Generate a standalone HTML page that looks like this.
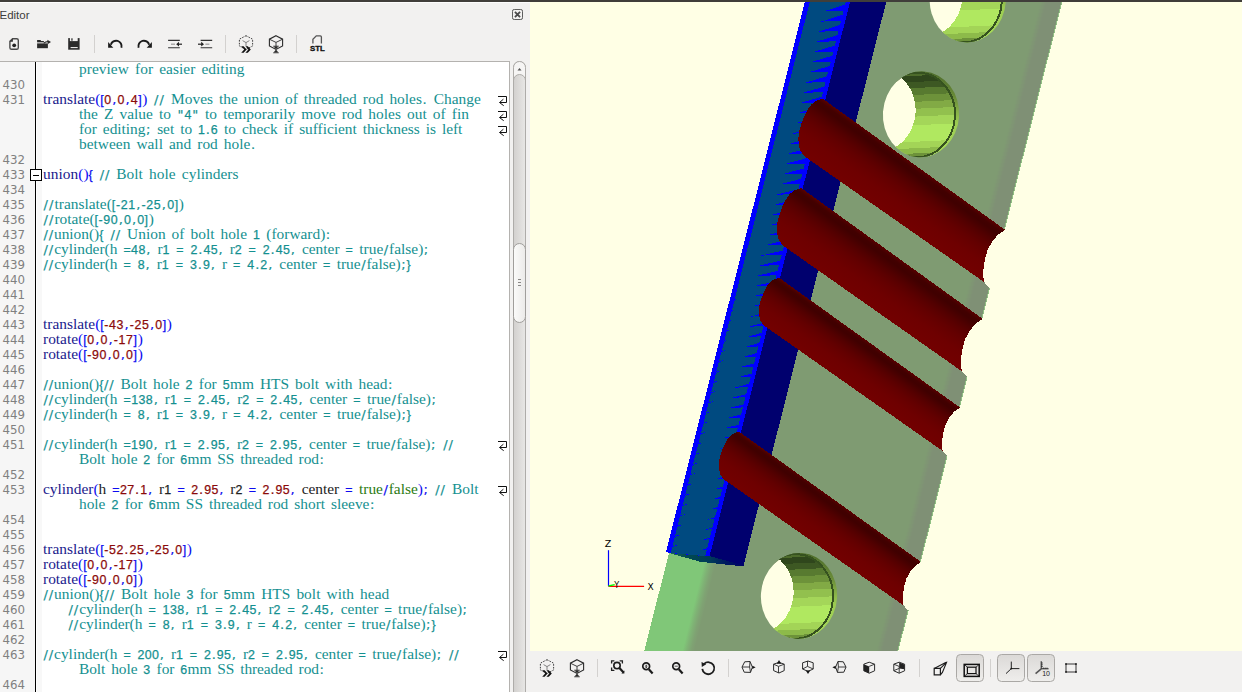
<!DOCTYPE html>
<html><head><meta charset="utf-8"><title>OpenSCAD</title>
<style>
html,body{margin:0;padding:0}
body{width:1242px;height:692px;overflow:hidden;position:relative;background:#f2f1f0;font-family:"Liberation Sans","DejaVu Sans",sans-serif}
#topbar{position:absolute;left:0;top:0;width:1242px;height:2px;background:#403e3a}
#hl{position:absolute;left:0;top:2px;width:530px;height:1px;background:#fdfdfd}
#title{position:absolute;left:-0.5px;top:7.6px;font-size:11.5px;color:#3c3c3c;line-height:14px}
#closeb{position:absolute;left:512px;top:9px}
#frame{position:absolute;left:-1px;top:61px;width:511px;height:640px;background:#fff;border:1px solid #b4b2af;box-sizing:border-box}
#margin{position:absolute;left:0;top:62px;width:35px;height:630px;background:#f6f6f6}
#mline{position:absolute;left:35px;top:62px;width:1.3px;height:630px;background:#000}
#fold{position:absolute;left:37px;top:62px;width:5px;height:630px;background:#f8f8f8}
.ln{position:absolute;left:0;width:25px;text-align:right;height:15px;line-height:15px;font-family:"DejaVu Sans",sans-serif;font-size:11.8px;color:#808080;padding-top:2px;box-sizing:border-box}
.cl{position:absolute;height:15px;line-height:15px;white-space:pre;font-family:"Liberation Serif",serif;font-size:15.4px;word-spacing:2.2px;color:#000}
.cl i{font-style:normal;font-family:"Liberation Sans",sans-serif;font-size:12.4px;word-spacing:2.6px;letter-spacing:var(--ls);-webkit-text-stroke:0.25px}
.cl u{text-decoration:none;font-family:"DejaVu Sans",sans-serif;font-size:13px;letter-spacing:calc(0.5px + var(--ls));margin-left:0.5px;-webkit-text-stroke:0.2px}
.k{color:#1a1a8c} .p{color:#0c0cf0} .n{color:#8b0a0a} .c{color:#149090} .v{color:#222} .g{color:#2a7a12}
.wm{position:absolute;left:498px}
#fold433{position:absolute;left:30px;top:169px;width:10px;height:10px;border:1px solid #000;background:#fff}
#fold433:after{content:"";position:absolute;left:2px;top:4.5px;width:6px;height:1px;background:#000}
#sb{position:absolute;left:513px;top:61px;width:13px;height:640px}
#view{position:absolute;left:530px;top:2px;width:712px;height:649px;background:#ffffe5;overflow:hidden}
#btool{position:absolute;left:526px;top:651px;width:716px;height:41px;background:#f2f1f0}
</style></head><body>
<div id="topbar"></div><div id="hl"></div>
<div id="title">Editor</div>
<svg id="closeb" width="11" height="11" viewBox="0 0 12 12"><rect x="0.5" y="0.5" width="11" height="11" rx="2" fill="none" stroke="#4a4a4a"/><path d="M3.2 3.2L8.8 8.8M8.8 3.2L3.2 8.8" stroke="#4a4a4a" stroke-width="2" fill="none"/></svg>
<svg style="position:absolute;left:8px;top:37px" width="12" height="14" viewBox="0 0 12 14" ><path d="M4.6 1.7H8.7Q10.3 1.7 10.3 3.3V10.7Q10.3 12.3 8.7 12.3H3.5Q1.9 12.3 1.9 10.7V4.4Z" fill="none" stroke="#4a4a4a" stroke-width="1.4"/><path d="M4.9 1.6V4.8H1.8Z" fill="#333"/><circle cx="6.2" cy="8.3" r="1.9" fill="#222"/></svg>
<svg style="position:absolute;left:36px;top:38px" width="16" height="12" viewBox="0 0 16 12" ><path d="M1.1 2H4.8V3.1H7.9V4.1H1.1Z" fill="#2b2b2b"/><path d="M1.1 4.6H7.4" stroke="#8a8a8a" stroke-width="0.7"/><path d="M1.1 5.4H11.9V10.2H1.1Z" fill="#2b2b2b"/><path d="M7.6 5.2Q9.6 3.6 12 3.6" fill="none" stroke="#2b2b2b" stroke-width="1.3"/><path d="M11.3 1.7L15 4L11.9 6.1Z" fill="#2b2b2b"/></svg>
<svg style="position:absolute;left:67px;top:37px" width="14" height="14" viewBox="0 0 14 14" ><path d="M1.2 1.1H12.6V12.7H1.2Z" fill="#2b2b2b"/><rect x="2.9" y="0.9" width="7.8" height="3.2" fill="#f2f1f0"/><rect x="4.3" y="1.3" width="1.3" height="2.4" fill="#333"/><rect x="3.6" y="10" width="7.1" height="1.1" fill="#e6e5e4"/></svg>
<div style="position:absolute;left:94px;top:35px;width:1px;height:18px;background:#d3d1cf"></div>
<svg style="position:absolute;left:106px;top:38px" width="18" height="12" viewBox="0 0 18 12" ><path d="M15.4 9.7A5.5 5.5 0 0 0 4.8 6.7" fill="none" stroke="#1c1c1c" stroke-width="1.9"/><path d="M2.1 4L7.3 9.7H2.1Z" fill="#1c1c1c"/></svg>
<svg style="position:absolute;left:134px;top:38px" width="20" height="12" viewBox="0 0 20 12" ><path d="M4.6 9.7A5.5 5.5 0 0 1 15.2 6.7" fill="none" stroke="#1c1c1c" stroke-width="1.9"/><path d="M17.9 4L12.7 9.7H17.9Z" fill="#1c1c1c"/></svg>
<svg style="position:absolute;left:167px;top:38px" width="17" height="12" viewBox="0 0 17 12" ><path d="M1.1 2.4H12.8M1.1 9.8H12.8" stroke="#333" stroke-width="1.1"/><path d="M4 6.2H8" stroke="#9a9a9a" stroke-width="1.2"/><path d="M10.6 6.2H15" stroke="#222" stroke-width="1.2"/><path d="M9.2 6.2L12 3.8V8.6Z" fill="#222"/></svg>
<svg style="position:absolute;left:197px;top:38px" width="17" height="12" viewBox="0 0 17 12" ><path d="M3.6 2.4H15.2M3.6 9.8H15.2" stroke="#333" stroke-width="1.1"/><path d="M8.4 6.2H12.4" stroke="#9a9a9a" stroke-width="1.2"/><path d="M1 6.2H5" stroke="#222" stroke-width="1.2"/><path d="M7 6.2L4.2 3.8V8.6Z" fill="#222"/></svg>
<div style="position:absolute;left:225px;top:35px;width:1px;height:18px;background:#d3d1cf"></div>
<svg style="position:absolute;left:238px;top:34.5px" width="16" height="19" viewBox="0 0 16 19" ><path d="M8 0.7L14.6 4.2V11L8 14.5L1.4 11V4.2Z" fill="none" stroke="#2b2b2b" stroke-width="0.9" stroke-dasharray="1.6 1.2"/><path d="M8 7.6V11M8 7.6L4.6 5.6M8 7.6L11.4 5.6" fill="none" stroke="#666" stroke-width="0.8"/><path d="M3.2 11.2H5.6L8.6 14.4L5.6 17.8H3.2L6.2 14.4ZM7.4 11.2H9.8L12.8 14.4L9.8 17.8H7.4L10.4 14.4Z" fill="#111"/></svg>
<svg style="position:absolute;left:268px;top:34.5px" width="16" height="19" viewBox="0 0 16 19" ><path d="M8 0.7L14.6 4.2V11L8 14.5L1.4 11V4.2Z" fill="none" stroke="#2b2b2b" stroke-width="1.1"/><path d="M8 7.4V12M8 7.4L1.6 4.3M8 7.4L14.4 4.3" fill="none" stroke="#2b2b2b" stroke-width="0.9"/><path d="M5.6 11.4H10.4L8 14.2ZM5.6 17.6H10.4L8 14.6Z" fill="#2b2b2b"/><path d="M5.2 11.2H10.8M5.2 17.8H10.8" stroke="#2b2b2b" stroke-width="0.8"/></svg>
<div style="position:absolute;left:296px;top:35px;width:1px;height:18px;background:#d3d1cf"></div>
<svg style="position:absolute;left:308px;top:34px" width="20" height="19" viewBox="0 0 20 19" ><path d="M4.9 9.6V5.2L8.3 1.8H12.3Q13.4 1.8 13.4 2.9V9.6" fill="none" stroke="#555" stroke-width="1.3"/><text x="9.4" y="17.3" text-anchor="middle" font-family="Liberation Sans, DejaVu Sans, sans-serif" font-weight="bold" font-size="7.8" fill="#111" stroke="#111" stroke-width="0.35">STL</text></svg>
<div id="frame"></div><div id="margin"></div><div id="mline"></div><div id="fold"></div>
<div class="cl" id="r0" style="top:61px;left:79px;--ls:0.35px;letter-spacing:0.046px"><span class="c">preview for easier editing</span></div>
<div class="ln" style="top:76px">430</div>
<div class="ln" style="top:91px">431</div>
<div class="cl" id="r2" style="top:91px;left:43px;--ls:0.598px"><span class="k">translate</span><span class="p">(<i>[</i></span><span class="n"><i>0</i></span><span class="p"><u>,</u></span><span class="n"><i>0</i></span><span class="p"><u>,</u></span><span class="n"><i>4</i></span><span class="p"><i>]</i>)</span><span class="c"> <u>//</u> Moves the union of threaded rod holes<u>.</u> Change</span></div>
<svg class="wm" style="top:96px" width="10" height="11" viewBox="0 0 10 11"><path d="M0 0.5H8.5V6.5H1.8M5.4 3.2L1.5 6.5L5.7 9.7" fill="none" stroke="#111" stroke-width="1"/></svg>
<div class="cl" id="r3" style="top:106px;left:79px;--ls:0.35px;letter-spacing:0.024px"><span class="c">the Z value to <u>"</u><i>4</i><u>"</u> to temporarily move rod holes out of fin</span></div>
<svg class="wm" style="top:111px" width="10" height="11" viewBox="0 0 10 11"><path d="M0 0.5H8.5V6.5H1.8M5.4 3.2L1.5 6.5L5.7 9.7" fill="none" stroke="#111" stroke-width="1"/></svg>
<div class="cl" id="r4" style="top:121px;left:79px;--ls:0.35px;letter-spacing:-0.031px"><span class="c">for editing<u>;</u> set to <i>1</i><u>.</u><i>6</i> to check if sufficient thickness is left</span></div>
<svg class="wm" style="top:126px" width="10" height="11" viewBox="0 0 10 11"><path d="M0 0.5H8.5V6.5H1.8M5.4 3.2L1.5 6.5L5.7 9.7" fill="none" stroke="#111" stroke-width="1"/></svg>
<div class="cl" id="r5" style="top:136px;left:79px;--ls:0.35px;letter-spacing:0.008px"><span class="c">between wall and rod hole<u>.</u></span></div>
<div class="ln" style="top:151px">432</div>
<div class="ln" style="top:166px">433</div>
<div class="cl" id="r7" style="top:166px;left:43px;--ls:0.35px;letter-spacing:0.041px"><span class="k">union</span><span class="p">()<i>{</i></span><span class="c"> <u>//</u> Bolt hole cylinders</span></div>
<div class="ln" style="top:181px">434</div>
<div class="ln" style="top:196px">435</div>
<div class="cl" id="r9" style="top:196px;left:43px;--ls:0.640px"><span class="c"><u>//</u>translate(<i>[-21</i><u>,</u><i>-25</i><u>,</u><i>0]</i>)</span></div>
<div class="ln" style="top:211px">436</div>
<div class="cl" id="r10" style="top:211px;left:43px;--ls:0.576px"><span class="c"><u>//</u>rotate(<i>[-90</i><u>,</u><i>0</i><u>,</u><i>0]</i>)</span></div>
<div class="ln" style="top:226px">437</div>
<div class="cl" id="r11" style="top:226px;left:43px;--ls:0.334px"><span class="c"><u>//</u>union()<i>{ </i><u>//</u> Union of bolt hole <i>1</i> (forward)<u>:</u></span></div>
<div class="ln" style="top:241px">438</div>
<div class="cl" id="r12" style="top:241px;left:43px;--ls:0.433px"><span class="c"><u>//</u>cylinder(h <i>=48</i><u>,</u> r<i>1 = 2</i><u>.</u><i>45</i><u>,</u> r<i>2 = 2</i><u>.</u><i>45</i><u>,</u> center <i>=</i> true<u>/</u>false)<u>;</u></span></div>
<div class="ln" style="top:256px">439</div>
<div class="cl" id="r13" style="top:256px;left:43px;--ls:0.464px"><span class="c"><u>//</u>cylinder(h <i>= 8</i><u>,</u> r<i>1 = 3</i><u>.</u><i>9</i><u>,</u> r <i>= 4</i><u>.</u><i>2</i><u>,</u> center <i>=</i> true<u>/</u>false)<u>;</u><i>}</i></span></div>
<div class="ln" style="top:271px">440</div>
<div class="ln" style="top:286px">441</div>
<div class="ln" style="top:301px">442</div>
<div class="ln" style="top:316px">443</div>
<div class="cl" id="r17" style="top:316px;left:43px;--ls:0.598px"><span class="k">translate</span><span class="p">(<i>[</i></span><span class="n"><i>-43</i></span><span class="p"><u>,</u></span><span class="n"><i>-25</i></span><span class="p"><u>,</u></span><span class="n"><i>0</i></span><span class="p"><i>]</i>)</span></div>
<div class="ln" style="top:331px">444</div>
<div class="cl" id="r18" style="top:331px;left:43px;--ls:0.621px"><span class="k">rotate</span><span class="p">(<i>[</i></span><span class="n"><i>0</i></span><span class="p"><u>,</u></span><span class="n"><i>0</i></span><span class="p"><u>,</u></span><span class="n"><i>-17</i></span><span class="p"><i>]</i>)</span></div>
<div class="ln" style="top:346px">445</div>
<div class="cl" id="r19" style="top:346px;left:43px;--ls:0.621px"><span class="k">rotate</span><span class="p">(<i>[</i></span><span class="n"><i>-90</i></span><span class="p"><u>,</u></span><span class="n"><i>0</i></span><span class="p"><u>,</u></span><span class="n"><i>0</i></span><span class="p"><i>]</i>)</span></div>
<div class="ln" style="top:361px">446</div>
<div class="ln" style="top:376px">447</div>
<div class="cl" id="r21" style="top:376px;left:43px;--ls:0.279px"><span class="c"><u>//</u>union()<i>{</i><u>//</u> Bolt hole <i>2</i> for <i>5</i>mm HTS bolt with head<u>:</u></span></div>
<div class="ln" style="top:391px">448</div>
<div class="cl" id="r22" style="top:391px;left:43px;--ls:0.447px"><span class="c"><u>//</u>cylinder(h <i>=138</i><u>,</u> r<i>1 = 2</i><u>.</u><i>45</i><u>,</u> r<i>2 = 2</i><u>.</u><i>45</i><u>,</u> center <i>=</i> true<u>/</u>false)<u>;</u></span></div>
<div class="ln" style="top:406px">449</div>
<div class="cl" id="r23" style="top:406px;left:43px;--ls:0.477px"><span class="c"><u>//</u>cylinder(h <i>= 8</i><u>,</u> r<i>1 = 3</i><u>.</u><i>9</i><u>,</u> r <i>= 4</i><u>.</u><i>2</i><u>,</u> center <i>=</i> true<u>/</u>false)<u>;</u><i>}</i></span></div>
<div class="ln" style="top:421px">450</div>
<div class="ln" style="top:436px">451</div>
<div class="cl" id="r25" style="top:436px;left:43px;--ls:0.429px"><span class="c"><u>//</u>cylinder(h <i>=190</i><u>,</u> r<i>1 = 2</i><u>.</u><i>95</i><u>,</u> r<i>2 = 2</i><u>.</u><i>95</i><u>,</u> center <i>=</i> true<u>/</u>false)<u>;</u><i> </i><u>//</u></span></div>
<svg class="wm" style="top:441px" width="10" height="11" viewBox="0 0 10 11"><path d="M0 0.5H8.5V6.5H1.8M5.4 3.2L1.5 6.5L5.7 9.7" fill="none" stroke="#111" stroke-width="1"/></svg>
<div class="cl" id="r26" style="top:451px;left:79px;--ls:0.35px;letter-spacing:-0.075px"><span class="c">Bolt hole <i>2</i> for <i>6</i>mm SS threaded rod<u>:</u></span></div>
<div class="ln" style="top:466px">452</div>
<div class="ln" style="top:481px">453</div>
<div class="cl" id="r28" style="top:481px;left:43px;--ls:0.410px"><span class="k">cylinder</span><span class="p">(</span><span class="v">h </span><span class="p"><i>=</i></span><span class="n"><i>27</i><u>.</u><i>1</i></span><span class="p"><u>,</u></span><span class="v"> r<i>1</i> </span><span class="p"><i>=</i> </span><span class="n"><i>2</i><u>.</u><i>95</i></span><span class="p"><u>,</u></span><span class="v"> r<i>2</i> </span><span class="p"><i>=</i> </span><span class="n"><i>2</i><u>.</u><i>95</i></span><span class="p"><u>,</u></span><span class="v"> center </span><span class="p"><i>=</i> </span><span class="g">true</span><span class="p"><u>/</u></span><span class="g">false</span><span class="p">)<u>;</u></span><span class="c"> <u>//</u> Bolt</span></div>
<svg class="wm" style="top:486px" width="10" height="11" viewBox="0 0 10 11"><path d="M0 0.5H8.5V6.5H1.8M5.4 3.2L1.5 6.5L5.7 9.7" fill="none" stroke="#111" stroke-width="1"/></svg>
<div class="cl" id="r29" style="top:496px;left:79px;--ls:0.35px;letter-spacing:-0.018px"><span class="c">hole <i>2</i> for <i>6</i>mm SS threaded rod short sleeve<u>:</u></span></div>
<div class="ln" style="top:511px">454</div>
<div class="ln" style="top:526px">455</div>
<div class="ln" style="top:541px">456</div>
<div class="cl" id="r32" style="top:541px;left:43px;--ls:0.547px"><span class="k">translate</span><span class="p">(<i>[</i></span><span class="n"><i>-52</i><u>.</u><i>25</i></span><span class="p"><u>,</u></span><span class="n"><i>-25</i></span><span class="p"><u>,</u></span><span class="n"><i>0</i></span><span class="p"><i>]</i>)</span></div>
<div class="ln" style="top:556px">457</div>
<div class="cl" id="r33" style="top:556px;left:43px;--ls:0.621px"><span class="k">rotate</span><span class="p">(<i>[</i></span><span class="n"><i>0</i></span><span class="p"><u>,</u></span><span class="n"><i>0</i></span><span class="p"><u>,</u></span><span class="n"><i>-17</i></span><span class="p"><i>]</i>)</span></div>
<div class="ln" style="top:571px">458</div>
<div class="cl" id="r34" style="top:571px;left:43px;--ls:0.621px"><span class="k">rotate</span><span class="p">(<i>[</i></span><span class="n"><i>-90</i></span><span class="p"><u>,</u></span><span class="n"><i>0</i></span><span class="p"><u>,</u></span><span class="n"><i>0</i></span><span class="p"><i>]</i>)</span></div>
<div class="ln" style="top:586px">459</div>
<div class="cl" id="r35" style="top:586px;left:43px;--ls:0.35px;letter-spacing:0.027px"><span class="c"><u>//</u>union()<i>{</i><u>//</u> Bolt hole <i>3</i> for <i>5</i>mm HTS bolt with head</span></div>
<div class="ln" style="top:601px">460</div>
<div class="cl" id="r36" style="top:601px;left:68px;--ls:0.434px"><span class="c"><u>//</u>cylinder(h <i>= 138</i><u>,</u> r<i>1 = 2</i><u>.</u><i>45</i><u>,</u> r<i>2 = 2</i><u>.</u><i>45</i><u>,</u> center <i>=</i> true<u>/</u>false)<u>;</u></span></div>
<div class="ln" style="top:616px">461</div>
<div class="cl" id="r37" style="top:616px;left:68px;--ls:0.460px"><span class="c"><u>//</u>cylinder(h <i>= 8</i><u>,</u> r<i>1 = 3</i><u>.</u><i>9</i><u>,</u> r <i>= 4</i><u>.</u><i>2</i><u>,</u> center <i>=</i> true<u>/</u>false)<u>;</u><i>}</i></span></div>
<div class="ln" style="top:631px">462</div>
<div class="ln" style="top:646px">463</div>
<div class="cl" id="r39" style="top:646px;left:43px;--ls:0.402px"><span class="c"><u>//</u>cylinder(h <i>= 200</i><u>,</u> r<i>1 = 2</i><u>.</u><i>95</i><u>,</u> r<i>2 = 2</i><u>.</u><i>95</i><u>,</u> center <i>=</i> true<u>/</u>false)<u>;</u><i> </i><u>//</u></span></div>
<svg class="wm" style="top:651px" width="10" height="11" viewBox="0 0 10 11"><path d="M0 0.5H8.5V6.5H1.8M5.4 3.2L1.5 6.5L5.7 9.7" fill="none" stroke="#111" stroke-width="1"/></svg>
<div class="cl" id="r40" style="top:661px;left:79px;--ls:0.35px;letter-spacing:-0.075px"><span class="c">Bolt hole <i>3</i> for <i>6</i>mm SS threaded rod<u>:</u></span></div>
<div class="ln" style="top:676px">464</div>
<div id="fold433"></div>
<svg id="sb" width="13" height="640" viewBox="0 0 13 640">
<defs><linearGradient id="tr" x1="0" x2="1" y1="0" y2="0"><stop offset="0" stop-color="#d2d0ce"/><stop offset="1" stop-color="#e8e7e5"/></linearGradient>
<linearGradient id="th" x1="0" x2="1" y1="0" y2="0"><stop offset="0" stop-color="#fbfbfa"/><stop offset="1" stop-color="#ebeae8"/></linearGradient></defs>
<path d="M0.5 640V6.5A6 6 0 0 1 12.5 6.5V640Z" fill="url(#tr)" stroke="#aeaca9"/>
<path d="M0.5 19.5V6.5A6 6 0 0 1 12.5 6.5V19.5A6 6 0 0 0 0.5 19.5Z" fill="#f6f5f4" stroke="#aeaca9"/>
<path d="M4.5 9.5L6.5 7L8.5 9.5Z" fill="#555"/>
<rect x="0.5" y="182.5" width="12" height="79" rx="6" fill="url(#th)" stroke="#a09e9b"/>
<path d="M5 218.5H8M5 221.5H8M5 224.5H8" stroke="#8a8886"/>
</svg>
<div id="view"><svg width="712" height="649" viewBox="0 0 712 649" style="position:absolute;left:0;top:0" shape-rendering="crispEdges">
<defs>
<linearGradient id="lgL" gradientUnits="userSpaceOnUse" x1="0" y1="0" x2="1" y2="0"></linearGradient>
</defs>
<polygon points="356.7,-2.0 532.8,-2.0 367.6,652.0 113.5,652.0 139.0,551.0" fill="#7f9b72"/>
<linearGradient id="gL" gradientUnits="userSpaceOnUse" x1="174.0" y1="561.7" x2="185.3" y2="564.5"><stop offset="0" stop-color="#80c778"/><stop offset="0.35" stop-color="#7fb375"/><stop offset="0.7" stop-color="#7fa373"/><stop offset="1" stop-color="#7f9b72"/></linearGradient>
<polygon points="141.0,543.0 195.0,543.0 170.0,652.0 113.5,652.0" fill="url(#gL)"/>
<linearGradient id="gB" gradientUnits="userSpaceOnUse" x1="0" y1="0" x2="7" y2="1.77"><stop offset="0" stop-color="#7f9b72"/><stop offset="1" stop-color="#7f9075"/></linearGradient>
<polygon points="510.8,-2.0 512.0,-2.0 346.8,652.0 345.6,652.0" fill="#7f9a72"/>
<polygon points="511.8,-2.0 513.0,-2.0 347.8,652.0 346.6,652.0" fill="#7f9873"/>
<polygon points="512.8,-2.0 514.0,-2.0 348.8,652.0 347.6,652.0" fill="#7f9673"/>
<polygon points="513.8,-2.0 515.0,-2.0 349.8,652.0 348.6,652.0" fill="#7f9574"/>
<polygon points="514.8,-2.0 516.0,-2.0 350.8,652.0 349.6,652.0" fill="#7f9374"/>
<polygon points="515.8,-2.0 517.0,-2.0 351.8,652.0 350.6,652.0" fill="#7f9175"/>
<polygon points="516.8,-2.0 532.8,-2.0 367.6,652.0 351.6,652.0" fill="#7f9075"/>
<polygon points="531.8,-2.0 532.8,-2.0 367.6,652.0 366.6,652.0" fill="#8fc082"/>
<polygon points="275.4,-2.0 356.7,-2.0 213.6,563.5 179.6,554.1 175.2,554.1 139.7,551.2 136.1,549.7" fill="#0000ff"/>
<polygon points="280.2,-2.0 316.4,-2.0 175.2,554.1 140.7,550.9" fill="#004a80"/>
<polygon points="320.5,-2.0 356.7,-2.0 213.6,563.5 179.6,554.1" fill="#00006e"/>
<linearGradient id="gW" gradientUnits="userSpaceOnUse" x1="139" y1="0" x2="214" y2="0"><stop offset="0" stop-color="#1a6a60"/><stop offset="0.25" stop-color="#004a50"/><stop offset="0.55" stop-color="#003a5a"/><stop offset="0.75" stop-color="#001a60"/><stop offset="1" stop-color="#000066"/></linearGradient>
<polygon points="138.8,551.0 175.2,554.1 179.6,554.1 213.6,563.5 205.5,563.6 170.8,559.9" fill="url(#gW)"/>
<path d="M315.8,2.3L314.2,8.8L293.7,9.4ZM313.2,12.6L311.6,19.0L291.1,19.6ZM310.6,22.8L309.0,29.1L288.4,29.7ZM308.1,33.0L306.5,39.3L285.8,39.9ZM305.5,43.3L303.9,49.5L283.2,50.1ZM302.9,53.5L301.3,59.7L280.6,60.3ZM300.3,63.8L298.8,69.9L278.0,70.5ZM297.7,74.0L296.2,80.1L275.4,80.7ZM295.1,84.3L293.6,90.2L272.8,90.8ZM292.5,94.5L291.0,100.4L270.2,101.0ZM289.9,104.8L288.5,110.6L267.6,111.2ZM287.3,115.0L285.9,120.8L265.0,121.4ZM284.8,125.3L283.3,131.0L262.4,131.6ZM282.2,135.6L280.8,141.2L259.7,141.8ZM279.6,145.8L278.2,151.3L257.1,151.9ZM277.0,156.1L275.6,161.5L254.5,162.1ZM274.4,166.3L273.0,171.7L251.9,172.3ZM271.8,176.6L270.5,181.9L249.3,182.5ZM269.2,186.8L267.9,192.1L246.7,192.7ZM266.6,197.1L265.3,202.3L244.1,202.9ZM264.0,207.3L262.8,212.4L241.5,213.0ZM261.5,217.6L260.2,222.6L238.9,223.2ZM258.9,227.8L257.6,232.7L236.3,233.3ZM256.3,238.1L255.1,242.9L233.7,243.5ZM253.7,248.3L252.5,253.0L231.1,253.6ZM251.1,258.6L249.9,263.2L228.5,263.8ZM248.5,268.8L247.4,273.3L226.0,273.9ZM245.9,279.1L244.8,283.5L224.6,284.1ZM243.3,289.3L242.2,293.7L223.2,294.3ZM240.8,299.6L239.7,303.8L221.9,304.4ZM238.2,309.8L237.1,314.0L220.5,314.6ZM235.6,320.1L234.5,324.1L219.1,324.7ZM233.0,330.3L232.0,334.3L217.5,334.9ZM230.4,340.6L229.4,344.4L214.8,345.0ZM227.8,350.8L226.9,354.6L212.1,355.2ZM225.2,361.1L224.3,364.7L209.5,365.3ZM222.6,371.3L221.7,374.9L206.8,375.5ZM220.0,381.6L219.2,385.1L204.1,385.7ZM217.5,391.8L216.6,395.2L201.5,395.8ZM214.9,402.1L214.0,405.4L198.8,406.0ZM212.3,412.3L211.5,415.5L196.1,416.1ZM209.7,422.6L208.9,425.7L193.5,426.3ZM207.1,432.8L206.3,435.8L191.4,436.4ZM204.5,443.1L203.8,446.0L190.2,446.6ZM201.9,453.3L201.2,456.1L188.9,456.7ZM199.3,463.6L198.6,466.3L187.7,466.9ZM196.7,473.8L196.1,476.4L186.4,477.0ZM194.2,484.1L193.5,486.6L185.0,487.2ZM191.6,494.3L191.0,496.7L182.7,497.3ZM189.0,504.6L188.4,506.8L180.4,507.4ZM186.4,514.8L185.8,517.0L178.1,517.6ZM183.8,525.0L183.3,527.1L175.8,527.7ZM181.2,535.3L180.7,537.2L173.4,537.8ZM178.6,545.5L178.2,547.4L171.1,548.0Z" fill="#0000ff"/>
<path d="M203.9,298.0L207.4,296.8L203.6,299.3ZM201.4,308.2L205.0,307.1L201.0,309.6ZM198.8,318.5L202.6,317.3L198.4,319.8ZM196.2,328.8L200.2,327.6L195.8,330.1ZM193.6,339.0L197.7,337.8L193.3,340.3ZM191.0,349.2L195.3,348.1L190.7,350.6ZM188.4,359.5L192.9,358.3L188.1,360.8ZM185.8,369.8L190.5,368.6L185.5,371.1ZM183.2,380.0L188.0,378.8L182.9,381.3ZM180.6,390.2L185.6,389.1L180.3,391.6ZM178.1,400.5L183.2,399.3L177.7,401.8ZM175.5,410.8L180.8,409.6L175.1,412.1ZM172.9,421.0L178.3,419.8L172.6,422.3ZM170.3,431.2L175.9,430.1L170.0,432.6ZM167.7,441.5L173.5,440.3L167.4,442.8ZM165.1,451.8L171.1,450.6L164.8,453.1ZM162.5,462.0L168.7,460.8L162.2,463.3ZM159.9,472.2L166.2,471.1L159.6,473.6ZM157.3,482.5L163.8,481.3L157.0,483.8ZM154.8,492.8L161.4,491.6L154.4,494.1ZM152.2,503.0L159.0,501.8L151.8,504.3ZM149.6,513.2L156.5,512.0L149.3,514.5ZM147.0,523.5L154.1,522.3L146.7,524.8ZM144.4,533.8L151.7,532.5L144.1,535.0ZM141.8,544.0L149.3,542.8L141.5,545.3Z" fill="#0000ff"/>
<clipPath id="hc1"><ellipse cx="437.8" cy="-2.6" rx="38.1" ry="43.0" transform="rotate(4 437.8 -2.6)"/></clipPath>
<linearGradient id="hg1" gradientUnits="userSpaceOnUse" x1="432.8" y1="-45.6" x2="442.8" y2="40.4"><stop offset="0" stop-color="#4d6b2b"/><stop offset="0.05" stop-color="#4d6b2b"/><stop offset="0.05" stop-color="#2f461c"/><stop offset="0.12" stop-color="#2f461c"/><stop offset="0.12" stop-color="#3d5823"/><stop offset="0.19" stop-color="#3d5823"/><stop offset="0.19" stop-color="#587a30"/><stop offset="0.27" stop-color="#587a30"/><stop offset="0.27" stop-color="#6d923a"/><stop offset="0.35" stop-color="#6d923a"/><stop offset="0.35" stop-color="#82aa45"/><stop offset="0.43" stop-color="#82aa45"/><stop offset="0.43" stop-color="#92c04e"/><stop offset="0.52" stop-color="#92c04e"/><stop offset="0.52" stop-color="#a4d659"/><stop offset="0.62" stop-color="#a4d659"/><stop offset="0.62" stop-color="#b0e860"/><stop offset="0.81" stop-color="#b0e860"/><stop offset="0.81" stop-color="#a3d457"/><stop offset="0.885" stop-color="#a3d457"/><stop offset="0.885" stop-color="#8dba4a"/><stop offset="0.945" stop-color="#8dba4a"/><stop offset="0.945" stop-color="#6d923a"/><stop offset="1" stop-color="#6d923a"/></linearGradient>
<linearGradient id="hr1" gradientUnits="userSpaceOnUse" x1="0" y1="-45.6" x2="0" y2="40.4"><stop offset="0" stop-color="#4d6b2b"/><stop offset="0.3" stop-color="#6a8c38"/><stop offset="0.6" stop-color="#9ccc52"/><stop offset="1" stop-color="#a8dc5a"/></linearGradient>
<clipPath id="hw1"><rect x="412.3" y="-48.6" width="68" height="92"/></clipPath>
<g clip-path="url(#hc1)">
<g clip-path="url(#hw1)">
<rect x="397.8" y="-48.6" width="82" height="92" fill="url(#hr1)"/>
<ellipse cx="434.0" cy="-2.0" rx="37.800000000000004" ry="42.4" transform="rotate(4 434.0 -2.0)" fill="url(#hg1)" stroke="#36521f" stroke-width="2"/>
</g>
<ellipse cx="396.2" cy="-6.1" rx="36.2" ry="41" transform="rotate(4 396.2 -6.1)" fill="#ffffe5"/>
</g>
<clipPath id="hc2"><ellipse cx="391.0" cy="112.3" rx="38.1" ry="43.0" transform="rotate(4 391.0 112.3)"/></clipPath>
<linearGradient id="hg2" gradientUnits="userSpaceOnUse" x1="386.0" y1="69.3" x2="396.0" y2="155.3"><stop offset="0" stop-color="#4d6b2b"/><stop offset="0.05" stop-color="#4d6b2b"/><stop offset="0.05" stop-color="#2f461c"/><stop offset="0.12" stop-color="#2f461c"/><stop offset="0.12" stop-color="#3d5823"/><stop offset="0.19" stop-color="#3d5823"/><stop offset="0.19" stop-color="#587a30"/><stop offset="0.27" stop-color="#587a30"/><stop offset="0.27" stop-color="#6d923a"/><stop offset="0.35" stop-color="#6d923a"/><stop offset="0.35" stop-color="#82aa45"/><stop offset="0.43" stop-color="#82aa45"/><stop offset="0.43" stop-color="#92c04e"/><stop offset="0.52" stop-color="#92c04e"/><stop offset="0.52" stop-color="#a4d659"/><stop offset="0.62" stop-color="#a4d659"/><stop offset="0.62" stop-color="#b0e860"/><stop offset="0.81" stop-color="#b0e860"/><stop offset="0.81" stop-color="#a3d457"/><stop offset="0.885" stop-color="#a3d457"/><stop offset="0.885" stop-color="#8dba4a"/><stop offset="0.945" stop-color="#8dba4a"/><stop offset="0.945" stop-color="#6d923a"/><stop offset="1" stop-color="#6d923a"/></linearGradient>
<linearGradient id="hr2" gradientUnits="userSpaceOnUse" x1="0" y1="69.3" x2="0" y2="155.3"><stop offset="0" stop-color="#4d6b2b"/><stop offset="0.3" stop-color="#6a8c38"/><stop offset="0.6" stop-color="#9ccc52"/><stop offset="1" stop-color="#a8dc5a"/></linearGradient>
<clipPath id="hw2"><rect x="365.5" y="66.3" width="68" height="92"/></clipPath>
<g clip-path="url(#hc2)">
<g clip-path="url(#hw2)">
<rect x="351.0" y="66.3" width="82" height="92" fill="url(#hr2)"/>
<ellipse cx="387.2" cy="112.9" rx="37.800000000000004" ry="42.4" transform="rotate(4 387.2 112.9)" fill="url(#hg2)" stroke="#36521f" stroke-width="2"/>
</g>
<ellipse cx="349.4" cy="108.8" rx="36.2" ry="41" transform="rotate(4 349.4 108.8)" fill="#ffffe5"/>
</g>
<clipPath id="hc3"><ellipse cx="269.0" cy="593.9" rx="38.1" ry="43.0" transform="rotate(4 269.0 593.9)"/></clipPath>
<linearGradient id="hg3" gradientUnits="userSpaceOnUse" x1="264.0" y1="550.9" x2="274.0" y2="636.9"><stop offset="0" stop-color="#4d6b2b"/><stop offset="0.05" stop-color="#4d6b2b"/><stop offset="0.05" stop-color="#2f461c"/><stop offset="0.12" stop-color="#2f461c"/><stop offset="0.12" stop-color="#3d5823"/><stop offset="0.19" stop-color="#3d5823"/><stop offset="0.19" stop-color="#587a30"/><stop offset="0.27" stop-color="#587a30"/><stop offset="0.27" stop-color="#6d923a"/><stop offset="0.35" stop-color="#6d923a"/><stop offset="0.35" stop-color="#82aa45"/><stop offset="0.43" stop-color="#82aa45"/><stop offset="0.43" stop-color="#92c04e"/><stop offset="0.52" stop-color="#92c04e"/><stop offset="0.52" stop-color="#a4d659"/><stop offset="0.62" stop-color="#a4d659"/><stop offset="0.62" stop-color="#b0e860"/><stop offset="0.81" stop-color="#b0e860"/><stop offset="0.81" stop-color="#a3d457"/><stop offset="0.885" stop-color="#a3d457"/><stop offset="0.885" stop-color="#8dba4a"/><stop offset="0.945" stop-color="#8dba4a"/><stop offset="0.945" stop-color="#6d923a"/><stop offset="1" stop-color="#6d923a"/></linearGradient>
<linearGradient id="hr3" gradientUnits="userSpaceOnUse" x1="0" y1="550.9" x2="0" y2="636.9"><stop offset="0" stop-color="#4d6b2b"/><stop offset="0.3" stop-color="#6a8c38"/><stop offset="0.6" stop-color="#9ccc52"/><stop offset="1" stop-color="#a8dc5a"/></linearGradient>
<clipPath id="hw3"><rect x="243.5" y="547.9" width="68" height="92"/></clipPath>
<g clip-path="url(#hc3)">
<g clip-path="url(#hw3)">
<rect x="229.0" y="547.9" width="82" height="92" fill="url(#hr3)"/>
<ellipse cx="265.2" cy="594.5" rx="37.800000000000004" ry="42.4" transform="rotate(4 265.2 594.5)" fill="url(#hg3)" stroke="#36521f" stroke-width="2"/>
</g>
<ellipse cx="227.4" cy="590.4" rx="36.2" ry="41" transform="rotate(4 227.4 590.4)" fill="#ffffe5"/>
</g>
<polygon points="475.4,227.2 475.1,227.8 468.1,232.5 462.1,239.8 457.6,247.8 455.1,256.8 453.6,265.8 453.1,273.8 454.3,280.2 457.1,283.6 459.9,286.0 462.1,286.0 476.8,227.2" fill="#ffffe5"/>
<linearGradient id="cg1" gradientUnits="userSpaceOnUse" x1="292.6" y1="96.7" x2="259.1" y2="143.3"><stop offset="0" stop-color="#5e0000"/><stop offset="0.03" stop-color="#4e0000"/><stop offset="0.07" stop-color="#420000"/><stop offset="0.13" stop-color="#400000"/><stop offset="0.2" stop-color="#480000"/><stop offset="0.28" stop-color="#520000"/><stop offset="0.37" stop-color="#5b0000"/><stop offset="0.47" stop-color="#630000"/><stop offset="0.58" stop-color="#690000"/><stop offset="0.7" stop-color="#6e0000"/><stop offset="1" stop-color="#730000"/></linearGradient>
<polygon points="276.4,155.7 273.1,152.7 270.1,148.2 268.9,143.2 268.4,137.7 268.6,132.7 269.6,127.7 271.6,121.2 274.1,114.7 277.6,107.7 281.6,102.2 286.6,98.7 292.6,96.7 475.1,227.8 468.1,232.5 462.1,239.8 457.6,247.8 455.1,256.8 453.6,265.8 453.1,273.8 454.3,280.2" fill="url(#cg1)"/>
<polygon points="453.0,316.3 452.7,316.9 445.7,321.6 439.7,328.9 435.2,336.9 432.7,345.9 431.2,354.9 430.7,362.9 431.9,369.3 434.7,372.7 437.5,375.1 439.6,375.1 454.3,316.3" fill="#ffffe5"/>
<linearGradient id="cg2" gradientUnits="userSpaceOnUse" x1="271.2" y1="186.0" x2="237.7" y2="232.5"><stop offset="0" stop-color="#5e0000"/><stop offset="0.03" stop-color="#4e0000"/><stop offset="0.07" stop-color="#420000"/><stop offset="0.13" stop-color="#400000"/><stop offset="0.2" stop-color="#480000"/><stop offset="0.28" stop-color="#520000"/><stop offset="0.37" stop-color="#5b0000"/><stop offset="0.47" stop-color="#630000"/><stop offset="0.58" stop-color="#690000"/><stop offset="0.7" stop-color="#6e0000"/><stop offset="1" stop-color="#730000"/></linearGradient>
<polygon points="255.0,245.0 251.7,242.0 248.7,237.5 247.5,232.5 247.0,227.0 247.2,222.0 248.2,217.0 250.2,210.5 252.7,204.0 256.2,197.0 260.2,191.5 265.2,188.0 271.2,186.0 452.7,316.9 445.7,321.6 439.7,328.9 435.2,336.9 432.7,345.9 431.2,354.9 430.7,362.9 431.9,369.3" fill="url(#cg2)"/>
<polygon points="430.4,405.0 430.1,405.6 424.3,409.5 419.3,415.6 415.6,422.2 413.5,429.7 412.3,437.1 411.8,443.8 412.8,449.1 415.2,451.9 417.5,453.9 419.7,453.9 431.9,405.0" fill="#ffffe5"/>
<linearGradient id="cg3" gradientUnits="userSpaceOnUse" x1="249.0" y1="275.7" x2="221.2" y2="314.4"><stop offset="0" stop-color="#5e0000"/><stop offset="0.03" stop-color="#4e0000"/><stop offset="0.07" stop-color="#420000"/><stop offset="0.13" stop-color="#400000"/><stop offset="0.2" stop-color="#480000"/><stop offset="0.28" stop-color="#520000"/><stop offset="0.37" stop-color="#5b0000"/><stop offset="0.47" stop-color="#630000"/><stop offset="0.58" stop-color="#690000"/><stop offset="0.7" stop-color="#6e0000"/><stop offset="1" stop-color="#730000"/></linearGradient>
<polygon points="235.6,324.7 232.8,322.2 230.3,318.4 229.3,314.3 228.9,309.7 229.1,305.6 229.9,301.4 231.6,296.0 233.6,290.6 236.5,284.8 239.9,280.3 244.0,277.4 249.0,275.7 430.1,405.6 424.3,409.5 419.3,415.6 415.6,422.2 413.5,429.7 412.3,437.1 411.8,443.8 412.8,449.1" fill="url(#cg3)"/>
<polygon points="391.2,559.3 390.9,559.9 385.1,563.8 380.1,569.9 376.4,576.5 374.3,584.0 373.1,591.4 372.6,598.1 373.6,603.4 376.0,606.2 378.3,608.2 380.7,608.2 392.9,559.3" fill="#ffffe5"/>
<linearGradient id="cg4" gradientUnits="userSpaceOnUse" x1="209.0" y1="429.6" x2="181.3" y2="468.3"><stop offset="0" stop-color="#5e0000"/><stop offset="0.03" stop-color="#4e0000"/><stop offset="0.07" stop-color="#420000"/><stop offset="0.13" stop-color="#400000"/><stop offset="0.2" stop-color="#480000"/><stop offset="0.28" stop-color="#520000"/><stop offset="0.37" stop-color="#5b0000"/><stop offset="0.47" stop-color="#630000"/><stop offset="0.58" stop-color="#690000"/><stop offset="0.7" stop-color="#6e0000"/><stop offset="1" stop-color="#730000"/></linearGradient>
<polygon points="195.6,478.6 192.8,476.1 190.3,472.3 189.3,468.2 188.9,463.6 189.1,459.5 189.9,455.3 191.6,449.9 193.6,444.5 196.5,438.7 199.9,434.2 204.0,431.3 209.0,429.6 390.9,559.9 385.1,563.8 380.1,569.9 376.4,576.5 374.3,584.0 373.1,591.4 372.6,598.1 373.6,603.4" fill="url(#cg4)"/>
<g shape-rendering="auto">
<path d="M78.5,548.2V584.3" stroke="#0000ff" stroke-width="1.2"/>
<path d="M78.5,584.3H114.10000000000002" stroke="#ff0000" stroke-width="1.2"/>
<path d="M78.5,584L84.70000000000005,582.6" stroke="#00ff00" stroke-width="1.4"/>
<text x="74.70000000000005" y="544.9" font-family="DejaVu Sans, sans-serif" font-size="9.5" fill="#000">Z</text>
<text x="117.60000000000002" y="588.2" font-family="DejaVu Sans, sans-serif" font-size="9" fill="#000">X</text>
<text x="84.29999999999995" y="586.0" font-family="DejaVu Sans, sans-serif" font-size="8" fill="#000">Y</text>
</g>
</svg></div>
<div id="btool"></div>
<svg style="position:absolute;left:539px;top:659.2px" width="16" height="19" viewBox="0 0 16 19" ><path d="M8 0.7L14.6 4.2V11L8 14.5L1.4 11V4.2Z" fill="none" stroke="#2b2b2b" stroke-width="0.9" stroke-dasharray="1.6 1.2"/><path d="M8 7.6V11M8 7.6L4.6 5.6M8 7.6L11.4 5.6" fill="none" stroke="#666" stroke-width="0.8"/><path d="M3.2 11.2H5.6L8.6 14.4L5.6 17.8H3.2L6.2 14.4ZM7.4 11.2H9.8L12.8 14.4L9.8 17.8H7.4L10.4 14.4Z" fill="#111"/></svg>
<svg style="position:absolute;left:569px;top:659.2px" width="16" height="19" viewBox="0 0 16 19" ><path d="M8 0.7L14.6 4.2V11L8 14.5L1.4 11V4.2Z" fill="none" stroke="#2b2b2b" stroke-width="1.1"/><path d="M8 7.4V12M8 7.4L1.6 4.3M8 7.4L14.4 4.3" fill="none" stroke="#2b2b2b" stroke-width="0.9"/><path d="M5.6 11.4H10.4L8 14.2ZM5.6 17.6H10.4L8 14.6Z" fill="#2b2b2b"/><path d="M5.2 11.2H10.8M5.2 17.8H10.8" stroke="#2b2b2b" stroke-width="0.8"/></svg>
<div style="position:absolute;left:597px;top:659px;width:1px;height:18px;background:#d3d1cf"></div>
<svg style="position:absolute;left:610px;top:659.4px" width="16" height="16" viewBox="0 0 16 16" ><path d="M1.6 4.6V1.9H4.4M9.6 1.9H12.4V4.6M1.6 8.4V11.4H4.4" fill="none" stroke="#222" stroke-width="1.3"/><circle cx="7" cy="6.6" r="3.2" fill="none" stroke="#1c1c1c" stroke-width="1.6"/><path d="M9.4 9L13.6 13.6" stroke="#1c1c1c" stroke-width="2.2"/><path d="M14.4 11.4V14.6H11.4Z" fill="#1c1c1c"/></svg>
<svg style="position:absolute;left:641px;top:661px" width="14" height="14" viewBox="0 0 14 14" ><circle cx="5.2" cy="5.3" r="3.4" fill="none" stroke="#1c1c1c" stroke-width="1.7"/><path d="M5.2 3.7V6.9" stroke="#1c1c1c" stroke-width="1.2"/><path d="M3.8 5.3H6.6" stroke="#777" stroke-width="0.8"/><path d="M7.8 8.2L11.6 12.4" stroke="#1c1c1c" stroke-width="2.2"/></svg>
<svg style="position:absolute;left:671px;top:661px" width="14" height="14" viewBox="0 0 14 14" ><circle cx="5.2" cy="5.3" r="3.4" fill="none" stroke="#1c1c1c" stroke-width="1.7"/><path d="M3.6 5.2H6.8" stroke="#555" stroke-width="1"/><path d="M7.8 8.2L11.6 12.4" stroke="#1c1c1c" stroke-width="2.2"/></svg>
<svg style="position:absolute;left:700px;top:660px" width="16" height="16" viewBox="0 0 16 16" ><path d="M4.1 3.9A6 6 0 1 1 2.3 8.9" fill="none" stroke="#1c1c1c" stroke-width="1.8"/><path d="M1.5 2L6.2 4.2L1.8 6.9Z" fill="#1c1c1c"/></svg>
<div style="position:absolute;left:728px;top:659px;width:1px;height:18px;background:#d3d1cf"></div>
<svg style="position:absolute;left:740px;top:659.5px" width="18" height="15" viewBox="0 0 18 15" ><path d="M2 7.1L4.7 1.8L10 1.5L12.4 7.1L10.5 12.4L4.2 12.2Z" fill="none" stroke="#2b2b2b" stroke-width="1"/><path d="M2 7H9.6M10 1.5L9.6 7L10.5 12.4" fill="none" stroke="#2b2b2b" stroke-width="0.9"/><path d="M12.3 5.7L15.6 7.35L12.3 9Z" fill="#111"/></svg>
<svg style="position:absolute;left:771px;top:659px" width="16" height="16" viewBox="0 0 16 16" ><path d="M2.6 5.2L8 3.4L13.2 5.2V11.6L8 14L2.6 11.6Z" fill="none" stroke="#2b2b2b" stroke-width="1"/><path d="M2.6 5.2L7.5 7.4L13.2 5.2M7.5 7.4V14" fill="none" stroke="#2b2b2b" stroke-width="0.9"/><path d="M5.8 4.8L8 1L10.2 4.8Z" fill="#111"/></svg>
<svg style="position:absolute;left:800px;top:659px" width="16" height="16" viewBox="0 0 16 16" ><path d="M2.6 3.8L8 2L13.2 3.8V10L8 12.4L2.6 10Z" fill="none" stroke="#2b2b2b" stroke-width="1"/><path d="M2.6 10L7.5 7.4L13.2 10M7.5 7.4V2" fill="none" stroke="#2b2b2b" stroke-width="0.9"/><path d="M5.8 11.4L8 15L10.2 11.4Z" fill="#111"/></svg>
<svg style="position:absolute;left:830px;top:659.5px" width="18" height="15" viewBox="0 0 18 15" ><path d="M16 7.1L13.3 1.8L8 1.5L5.6 7.1L7.5 12.4L13.8 12.2Z" fill="none" stroke="#2b2b2b" stroke-width="1"/><path d="M16 7H8.4M8 1.5L8.4 7L7.5 12.4" fill="none" stroke="#2b2b2b" stroke-width="0.9"/><path d="M5.7 5.7L2.4 7.35L5.7 9Z" fill="#111"/></svg>
<svg style="position:absolute;left:862px;top:660px" width="15" height="15" viewBox="0 0 15 15" ><path d="M1.8 4.2L7.2 2.2L12.6 4.2V10.8L7.2 13.2L1.8 10.8Z" fill="none" stroke="#2b2b2b" stroke-width="1"/><path d="M1.8 4.2L7.2 6.4V13.2L1.8 10.8Z" fill="#222"/><path d="M7.2 6.4L12.6 4.2" stroke="#2b2b2b" stroke-width="0.9"/></svg>
<svg style="position:absolute;left:892px;top:660px" width="15" height="15" viewBox="0 0 15 15" ><path d="M1.8 4.2L7.2 2.2L12.6 4.2V10.8L7.2 13.2L1.8 10.8Z" fill="none" stroke="#2b2b2b" stroke-width="1"/><path d="M7.2 2.6L12.4 4.4V9.2L7.2 8.4Z" fill="#222"/><path d="M1.8 4.2L7.2 6.4V13.2M7.2 8.4L1.8 10.6" fill="none" stroke="#2b2b2b" stroke-width="0.9"/></svg>
<div style="position:absolute;left:919px;top:659px;width:1px;height:18px;background:#d3d1cf"></div>
<svg style="position:absolute;left:932px;top:659.5px" width="17" height="17" viewBox="0 0 17 17" ><path d="M2.2 8.4H8.4V14.8H2.2Z" fill="none" stroke="#1c1c1c" stroke-width="1.2"/><path d="M2.2 8.4L13.6 2.4L14.6 2.2L10.4 12.4L8.4 14.8M8.4 8.4L14.4 2.4" fill="none" stroke="#1c1c1c" stroke-width="1.1"/></svg>
<svg style="position:absolute;left:956px;top:654px" width="28" height="28" viewBox="0 0 28 28" ><defs><linearGradient id="bg1" x1="0" y1="0" x2="0" y2="1"><stop offset="0" stop-color="#dbd9d7"/><stop offset="1" stop-color="#efeeec"/></linearGradient></defs><rect x="0.5" y="0.5" width="27" height="27" rx="4" fill="url(#bg1)" stroke="#aaa8a5"/></svg>
<svg style="position:absolute;left:963px;top:662.5px" width="18" height="15" viewBox="0 0 18 15" ><rect x="1.2" y="1.4" width="15" height="12" fill="none" stroke="#111" stroke-width="1.5"/><rect x="4.4" y="4.2" width="8.6" height="6.4" fill="none" stroke="#111" stroke-width="1.2"/><path d="M1.2 1.4L4.4 4.2M16.2 1.4L13 4.2M1.2 13.4L4.4 10.6M16.2 13.4L13 10.6" stroke="#111" stroke-width="0.8"/></svg>
<div style="position:absolute;left:990px;top:659px;width:1px;height:18px;background:#d3d1cf"></div>
<svg style="position:absolute;left:997px;top:654px" width="28" height="28" viewBox="0 0 28 28" ><defs><linearGradient id="bg2" x1="0" y1="0" x2="0" y2="1"><stop offset="0" stop-color="#dbd9d7"/><stop offset="1" stop-color="#efeeec"/></linearGradient></defs><rect x="0.5" y="0.5" width="27" height="27" rx="4" fill="url(#bg2)" stroke="#aaa8a5"/></svg>
<svg style="position:absolute;left:1003px;top:660px" width="18" height="18" viewBox="0 0 18 18" ><path d="M8.3 1.6V8.6H16.4M8.3 8.6L3 13.6" fill="none" stroke="#222" stroke-width="1"/><circle cx="8.3" cy="8.6" r="0.9" fill="#111"/></svg>
<svg style="position:absolute;left:1027px;top:654px" width="28" height="28" viewBox="0 0 28 28" ><defs><linearGradient id="bg3" x1="0" y1="0" x2="0" y2="1"><stop offset="0" stop-color="#dbd9d7"/><stop offset="1" stop-color="#efeeec"/></linearGradient></defs><rect x="0.5" y="0.5" width="27" height="27" rx="4" fill="url(#bg3)" stroke="#aaa8a5"/></svg>
<svg style="position:absolute;left:1033px;top:660px" width="20" height="18" viewBox="0 0 20 18" ><path d="M8.2 1.2V8.8H15.6" fill="none" stroke="#222" stroke-width="1"/><path d="M8.2 8.8L2.6 13.6" stroke="#555" stroke-width="1.6"/><path d="M8.2 3H9.8M8.2 4.8H9.8M8.2 6.6H9.8M10.4 8.8V7.6M12.2 8.8V7.6M14 8.8V7.6" stroke="#222" stroke-width="0.8"/><text x="9.2" y="15.6" font-family="Liberation Sans, DejaVu Sans, sans-serif" font-size="7" fill="#222">10</text></svg>
<svg style="position:absolute;left:1064px;top:662px" width="14" height="12" viewBox="0 0 14 12" ><rect x="2" y="2" width="10" height="8" fill="none" stroke="#222" stroke-width="0.9"/><path d="M1.2 1.2H2.8V2.8H1.2ZM11.2 1.2H12.8V2.8H11.2ZM1.2 9.2H2.8V10.8H1.2ZM11.2 9.2H12.8V10.8H11.2Z" fill="#111"/></svg>
</body></html>
